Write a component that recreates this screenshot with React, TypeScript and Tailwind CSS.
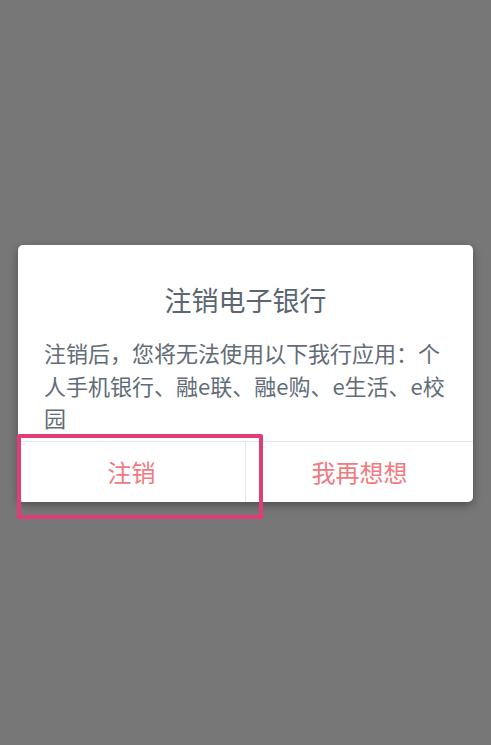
export default function App() {
  return (
    <div
      className="flex h-[745px] w-full items-center justify-center bg-[#777777] px-[18px]"
      style={{ fontFamily: '"Noto Sans CJK SC", "Noto Sans", sans-serif' }}
    >
      <div className="relative mt-[2px] w-full rounded-[5px] bg-white shadow-[0_3px_8px_rgba(0,0,0,0.35)]">
        <h2 className="pt-[37px] text-center text-[27px] leading-[36px] text-[#5b6670]">注销电子银行</h2>
        <p className="mt-[18px] px-[26px] pb-[7px] text-[22px] leading-[32.5px] text-[#616c76]">
          注销后，您将无法使用以下我行应用：个人手机银行、融e联、融e购、e生活、e校园
        </p>
        <div className="flex h-[61px] border-t border-[#e6e6e6]">
          <button className="flex-1 border-r border-[#e6e6e6] text-[24px] text-[#f07a80]">注销</button>
          <button className="flex-1 text-[24px] text-[#f07a80]">我再想想</button>
        </div>

        {/* highlight box */}
        <div className="pointer-events-none absolute left-[-1px] top-[189px] h-[85px] w-[246px] rounded-[2px] border-[4px] border-[#e03c78]" />
      </div>
    </div>
  );
}
